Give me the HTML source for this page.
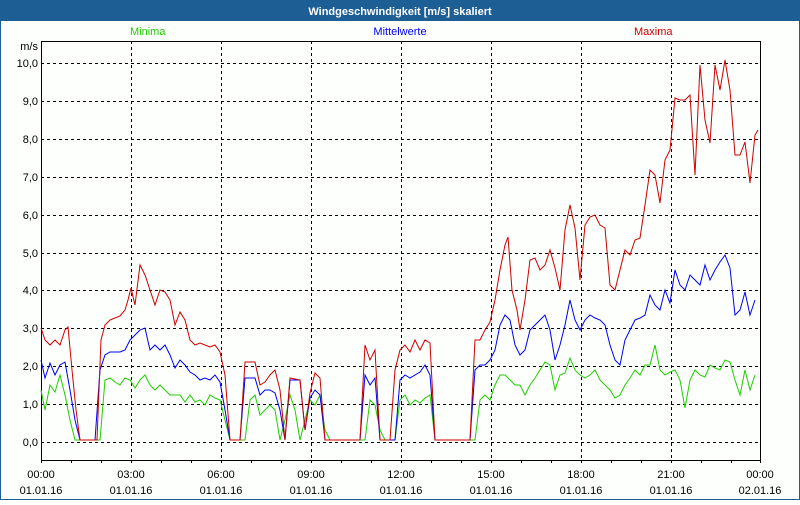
<!DOCTYPE html>
<html><head><meta charset="utf-8"><style>
html,body{margin:0;padding:0;background:#fff}
body{width:800px;height:500px;overflow:hidden;font-family:"Liberation Sans","DejaVu Sans",sans-serif}
</style></head><body>
<svg width="800" height="500" xmlns="http://www.w3.org/2000/svg" font-family="Liberation Sans, DejaVu Sans, sans-serif" font-size="11">
<rect x="0" y="0" width="800" height="500" fill="#1d5e94"/>
<rect x="1" y="21" width="798" height="478" fill="#fcfffc"/>
<text x="400" y="15" text-anchor="middle" fill="#fff" font-weight="bold" font-size="11">Windgeschwindigkeit [m/s] skaliert</text>
<text x="130" y="35" fill="#22cc00">Minima</text>
<text x="400" y="35" text-anchor="middle" fill="#0000ee">Mittelwerte</text>
<text x="634" y="35" fill="#cc0000">Maxima</text>
<text x="38" y="50" text-anchor="end" fill="#000">m/s</text>
<g fill="#000" text-anchor="end">
<text x="38" y="67">10,0</text><text x="38" y="105">9,0</text><text x="38" y="143">8,0</text><text x="38" y="181">7,0</text><text x="38" y="219">6,0</text><text x="38" y="257">5,0</text><text x="38" y="294">4,0</text><text x="38" y="332">3,0</text><text x="38" y="370">2,0</text><text x="38" y="408">1,0</text><text x="38" y="446">0,0</text>
</g>
<g stroke="#000" stroke-dasharray="3,3" stroke-width="1">
<path d="M41 63.5H761M41 101.5H761M41 139.5H761M41 177.5H761M41 215.5H761M41 253.5H761M41 290.5H761M41 328.5H761M41 366.5H761M41 404.5H761M41 442.5H761"/>
<path d="M131.5 41V460M221.5 41V460M311.5 41V460M401.5 41V460M491.5 41V460M581.5 41V460M671.5 41V460"/>
</g>
<rect x="41.5" y="41.5" width="719" height="419" fill="none" stroke="#000"/>
<path stroke="#000" d="M41.5 460v3M71.5 460v3M101.5 460v3M131.5 460v3M161.5 460v3M191.5 460v3M221.5 460v3M251.5 460v3M281.5 460v3M311.5 460v3M341.5 460v3M371.5 460v3M401.5 460v3M431.5 460v3M461.5 460v3M491.5 460v3M521.5 460v3M551.5 460v3M581.5 460v3M611.5 460v3M641.5 460v3M671.5 460v3M701.5 460v3M731.5 460v3M760.5 460v3"/>
<g fill="#000" text-anchor="middle">
<text x="41" y="478">00:00</text><text x="41" y="494">01.01.16</text>
<text x="131" y="478">03:00</text><text x="131" y="494">01.01.16</text>
<text x="221" y="478">06:00</text><text x="221" y="494">01.01.16</text>
<text x="311" y="478">09:00</text><text x="311" y="494">01.01.16</text>
<text x="401" y="478">12:00</text><text x="401" y="494">01.01.16</text>
<text x="491" y="478">15:00</text><text x="491" y="494">01.01.16</text>
<text x="581" y="478">18:00</text><text x="581" y="494">01.01.16</text>
<text x="671" y="478">21:00</text><text x="671" y="494">01.01.16</text>
<text x="760" y="478">00:00</text><text x="760" y="494">02.01.16</text>
</g>
<polyline fill="none" stroke="#22cc00" points="41,390 45,410 50,385 55,392 60,375 65,395 70,420 75,440 100,440 105,380 110,378 115,382 120,385 125,378 130,380 135,388 140,380 145,375 150,385 155,390 160,385 165,390 170,395 175,395 180,395 185,402 190,395 195,402 200,400 205,405 210,395 215,398 220,400 225,420 230,440 245,440 250,400 255,395 260,415 265,410 270,405 275,410 280,440 285,420 290,395 295,410 300,440 305,420 310,400 315,405 320,395 325,430 330,440 365,440 370,400 375,405 380,430 385,440 395,440 400,400 405,395 410,405 415,400 420,403 425,398 430,395 435,440 475,440 480,400 485,395 490,400 495,385 500,375 505,375 510,380 515,385 520,385 525,395 530,385 535,378 540,370 545,362 550,365 555,390 560,375 565,373 570,358 575,370 580,375 585,378 590,375 595,370 600,380 605,385 610,390 615,398 620,395 625,385 630,378 635,370 640,375 645,365 650,365 655,345 660,370 665,375 670,372 675,370 680,380 685,408 690,380 695,370 700,375 705,377 710,365 715,368 720,370 725,360 730,362 735,380 740,395 745,370 750,390 755,375"/>
<polyline fill="none" stroke="#0000ee" points="41,360 45,378 50,363 55,375 60,365 65,362 70,390 75,420 80,440 95,440 100,370 105,355 110,352 120,352 125,350 130,340 135,335 140,330 145,328 150,350 155,345 160,350 165,345 170,355 175,368 180,360 185,365 190,372 195,375 200,380 205,378 210,380 215,375 220,382 225,410 230,440 240,440 245,378 255,378 260,395 265,390 270,390 275,393 280,410 285,440 290,380 300,380 305,430 310,398 315,390 320,395 325,440 360,440 365,375 370,385 375,378 380,440 395,440 400,380 405,375 410,378 420,372 425,365 430,375 435,440 470,440 475,370 480,365 485,365 490,360 495,350 500,325 505,315 510,320 515,345 520,355 525,350 530,330 535,325 540,320 545,315 550,330 555,360 560,345 565,325 570,300 575,320 580,330 585,320 590,315 595,318 600,320 605,325 610,345 615,360 620,365 625,340 630,330 635,320 640,318 645,315 650,295 655,305 660,310 665,290 670,303 675,270 680,285 685,290 690,275 695,280 700,285 705,265 710,280 715,270 720,262 725,255 730,268 735,315 740,310 745,292 750,315 755,300"/>
<polyline fill="none" stroke="#cc0000" points="41,328 45,340 50,345 55,340 60,345 65,330 68,327 72,370 76,410 80,440 97,440 101,340 105,325 110,320 115,318 120,316 125,310 128,300 131,288 135,305 140,265 145,275 150,290 155,305 160,290 165,292 170,300 175,325 180,312 185,320 190,340 195,345 200,343 205,345 210,347 215,345 220,352 225,375 230,440 240,440 245,362 255,362 260,385 265,382 270,375 275,370 280,390 285,440 290,378 300,380 305,430 310,393 315,373 320,378 325,440 360,440 365,345 370,360 375,350 380,440 390,440 395,370 400,350 405,345 410,352 415,340 420,350 425,340 430,343 435,440 470,440 475,340 480,340 485,330 490,322 495,300 500,270 505,245 508,237 512,290 517,310 520,330 525,300 530,260 535,258 540,270 545,265 550,250 555,268 560,290 565,230 570,205 575,228 580,280 585,225 590,217 595,215 600,225 605,228 610,285 615,290 620,270 625,250 630,255 635,240 640,238 645,205 650,170 655,175 660,203 665,160 670,150 675,98 680,100 685,100 690,95 695,175 700,65 705,120 710,143 715,65 720,90 725,60 730,90 735,155 740,155 745,142 750,183 755,135 758,130"/>
</svg>
</body></html>
